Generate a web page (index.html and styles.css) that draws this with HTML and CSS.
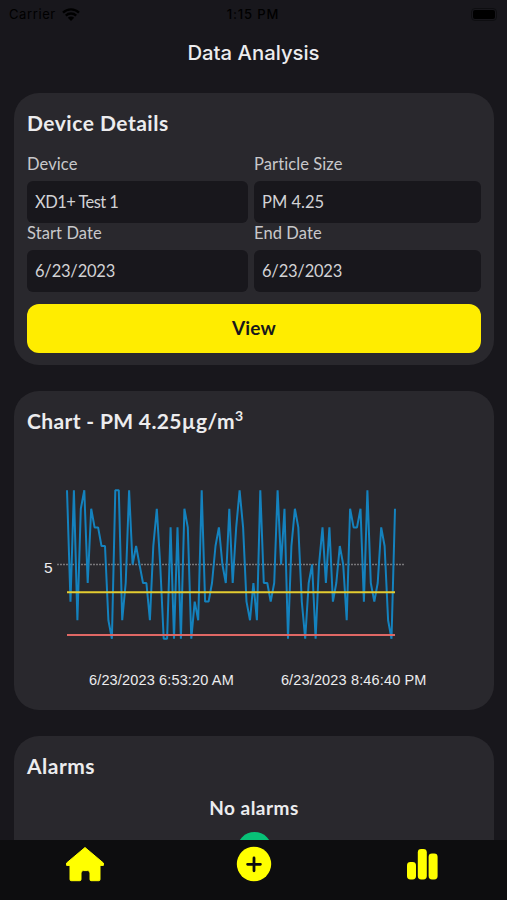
FILE: index.html
```html
<!DOCTYPE html>
<html lang="en">
<head>
    <meta charset="UTF-8">
    <meta name="viewport" content="width=device-width, initial-scale=1.0">
    <title>Data Analysis</title>
    <link rel="stylesheet" href="styles.css">
</head>
<body>
    <div class="status-bar">
        <div class="carrier">
            <span>Carrier</span>
            <svg class="wifi" viewBox="0 0 18 13">
                <path d="M1 4.6a11.5 11.5 0 0 1 16 0M3.8 7.6a7.5 7.5 0 0 1 10.4 0" fill="none" stroke="#000" stroke-width="2.3"/>
                <path d="M9 13L5.8 9.7a4.6 4.6 0 0 1 6.4 0z"/>
            </svg>
        </div>
        <div class="clock">1:15 PM</div>
        <div class="battery"><span></span></div>
    </div>
    <h1 class="title">Data Analysis</h1>

    <main class="content">
        <section class="card card-details">
            <h2>Device Details</h2>
            <div class="fields">
                <div class="field">
                    <label>Device</label>
                    <div class="input input-device">XD1+ Test 1</div>
                </div>
                <div class="field">
                    <label>Particle Size</label>
                    <div class="input">PM 4.25</div>
                </div>
                <div class="field">
                    <label>Start Date</label>
                    <div class="input input-date">6/23/2023</div>
                </div>
                <div class="field">
                    <label>End Date</label>
                    <div class="input input-date">6/23/2023</div>
                </div>
            </div>
            <button class="btn-view">View</button>
        </section>

        <section class="card card-chart">
            <h2>Chart - PM 4.25µg/m<sup>3</sup></h2>
            <div class="chart">
                <span class="y-label">5</span>
                <svg class="plot" width="350" height="170" viewBox="0 0 350 170">
                    <line class="grid" x1="0" y1="84.5" x2="347" y2="84.5"/>
                    <polyline id="series" class="series" points=""/>
                    <line class="limit-low" x1="10" y1="112.2" x2="338" y2="112.2"/>
                    <line class="limit-high" x1="10" y1="155" x2="338" y2="155"/>
                </svg>
            </div>
            <div class="x-labels">
                <span>6/23/2023 6:53:20 AM</span>
                <span>6/23/2023 8:46:40 PM</span>
            </div>
        </section>

        <section class="card card-alarms">
            <h2>Alarms</h2>
            <p>No alarms</p>
            <div class="status-dot"></div>
        </section>
    </main>

    <nav class="tab-bar">
        <a class="tab">
            <svg width="40" height="36" viewBox="0 0 40 36">
                <path d="M20 1.5L38.400 17v2.400H35V33.500q0 1.200-1.200 1.200H26q-1 0-1-1.200V27q0-2.400-2.400-2.400h-4.200Q16 24.600 16 27v6.500q0 1.200-1.200 1.200H6.200Q5 34.700 5 33.500V19.400H1.600V17z" fill="#ff0" stroke="#ff0" stroke-width="1" stroke-linejoin="round"/>
            </svg>
        </a>
        <a class="tab">
            <svg width="36" height="36" viewBox="0 0 36 36">
                <circle cx="18" cy="18" r="17.2" fill="#ff0"/>
                <path d="M18 12v12.800M11.600 18.300h12.800" stroke="#0d0d0f" stroke-width="2.800" stroke-linecap="round"/>
            </svg>
        </a>
        <a class="tab">
            <svg width="34" height="36" viewBox="0 0 34 36">
                <rect x="1" y="16" width="9" height="17.500" rx="3.400" fill="#ff0"/>
                <rect x="11.800" y="3" width="9" height="30.500" rx="3.400" fill="#ff0"/>
                <rect x="22.600" y="7.400" width="9" height="26.100" rx="3.400" fill="#ff0"/>
            </svg>
        </a>
    </nav>
    <script src="script.js"></script>
</body>
</html>
```
FILE: styles.css
```css
* {
    box-sizing: border-box;
}

body {
    margin: 0;
    height: 900px;
    overflow: hidden;
    display: flex;
    flex-direction: column;
    background: #18171c;
    color: #ececee;
    font-family: Lato, "Liberation Sans", sans-serif;
}

.status-bar {
    display: grid;
    grid-template-columns: 1fr auto 1fr;
    align-items: center;
    height: 28px;
    padding: 0 10px 0 9px;
    color: #000;
    font-family: Inter, sans-serif;
    font-size: 13px;
}

.carrier {
    display: flex;
    align-items: center;
    gap: 6px;
    letter-spacing: 0.6px;
}

.wifi {
    width: 18px;
    height: 13px;
}

.clock {
    font-weight: 500;
    letter-spacing: 0.9px;
}

.battery {
    justify-self: end;
    padding: 1px;
    border: 1px solid #0e0e11;
    border-radius: 4px;
}

.battery span {
    display: block;
    width: 22px;
    height: 9px;
    border-radius: 2px;
    background: #000;
}

.title {
    margin: 0;
    height: 64px;
    line-height: 49px;
    text-align: center;
    font-family: Inter, sans-serif;
    font-size: 20.3px;
    font-weight: 500;
}

.content {
    flex: 1;
    overflow: hidden;
    padding: 1px 13px 0 14px;
}

.card {
    background: #29282d;
    border-radius: 25px;
    padding: 0 13px;
    margin-bottom: 26px;
}

.card h2 {
    margin: 0;
    font-size: 21px;
    line-height: 26px;
    font-weight: 700;
    letter-spacing: 0.5px;
}

.card-details {
    height: 272px;
    padding-top: 17px;
}

.fields {
    display: grid;
    grid-template-columns: 221px 227px;
    column-gap: 6px;
    padding-top: 17px;
}

.field {
    height: 69px;
}

.field label {
    display: block;
    height: 28px;
    line-height: 22px;
    font-size: 16.5px;
    letter-spacing: 0.1px;
    color: #c8c8cb;
}

.input {
    height: 42px;
    padding-left: 8px;
    line-height: 42px;
    border-radius: 6px;
    background: #18171c;
    color: #d2d2d5;
    font-size: 16.5px;
}

.input-device {
    letter-spacing: -0.55px;
}

.input-date {
    letter-spacing: -0.2px;
}

.btn-view {
    display: block;
    width: 100%;
    height: 49px;
    margin-top: 13px;
    padding: 0 0 2px;
    border: none;
    border-radius: 12px;
    background: #ffed00;
    color: #18171c;
    font-family: inherit;
    font-size: 19px;
    font-weight: 700;
    letter-spacing: 0.2px;
}

.card-chart {
    height: 319px;
    padding-top: 17px;
}

.card-chart h2 {
    letter-spacing: 0.35px;
}

.card-chart sup {
    font-size: 14px;
    line-height: 0;
    vertical-align: 8px;
}

.chart {
    display: flex;
    align-items: center;
    padding: 46px 0 0 17px;
}

.y-label {
    width: 13px;
    padding-top: 6px;
    font-family: "Liberation Sans", sans-serif;
    font-size: 15.5px;
}

.grid {
    stroke: #77767a;
    stroke-width: 1.5;
    stroke-dasharray: 2 1;
}

.series {
    fill: none;
    stroke: #1482be;
    stroke-width: 2;
    stroke-linejoin: bevel;
}

.limit-low {
    stroke: #e3cb30;
    stroke-width: 2;
}

.limit-high {
    stroke: #df6865;
    stroke-width: 2;
}

.x-labels {
    display: flex;
    gap: 47px;
    padding: 21px 0 0 62px;
    font-family: "Liberation Sans", sans-serif;
    font-size: 14.5px;
    letter-spacing: 0.15px;
    line-height: 18px;
    white-space: nowrap;
}

.card-alarms {
    height: 180px;
    padding-top: 17px;
}

.card-alarms p {
    margin: 17px 0 12px;
    text-align: center;
    font-size: 19px;
    line-height: 24px;
    font-weight: 700;
    letter-spacing: 0.5px;
}

.status-dot {
    width: 35px;
    height: 35px;
    margin: 0 auto;
    border-radius: 50%;
    background: #08c177;
}

.tab-bar {
    display: grid;
    grid-template-columns: repeat(3, 1fr);
    height: 60px;
    padding-top: 6px;
    background: #0d0d0f;
}

.tab {
    text-align: center;
}
```
FILE: script.js
```js
const readings = [
    9, 3, 9, 2, 8, 9, 4, 8, 7, 7, 6, 6, 2, 1, 9, 9,
    2, 4, 9, 5, 6, 5, 4, 4, 2, 6, 8, 5, 1, 1, 7, 1,
    7, 1, 8, 7, 1, 3, 2, 9, 3, 3, 4, 6, 7, 5, 4, 8,
    4, 7, 9, 7, 3, 2, 4, 2, 9, 4, 4, 3, 4, 9, 5, 8,
    1, 6, 8, 7, 3, 1, 4, 5, 1, 5, 7, 4, 7, 3, 4, 6,
    5, 2, 8, 7, 7, 8, 3, 9, 4, 3, 4, 7, 6, 2, 1, 8
];

// plot area: 328px wide, 18.55px per unit, value 5 on the grid line
const stepX = 328 / (readings.length - 1);
const points = readings.map((v, i) => `${(10 + i * stepX).toFixed(1)},${(84.5 + (5 - v) * 18.55).toFixed(1)}`);
document.getElementById('series').setAttribute('points', points.join(' '));
```
